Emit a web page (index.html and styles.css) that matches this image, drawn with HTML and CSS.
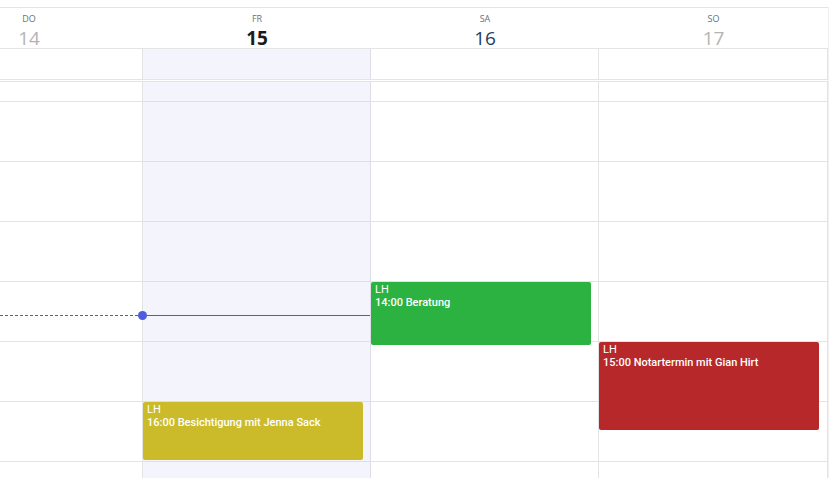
FILE: index.html
```html
<!DOCTYPE html>
<html lang="de">
  <head>
    <meta charset="UTF-8" />
    <meta name="viewport" content="width=device-width, initial-scale=1.0" />
    <title>Kalender Woche</title>
    <link rel="stylesheet" href="styles.css">
  </head>
  <body>
    <div class="calendar">
      <div class="week-head">
        <div class="day-head past">
          <span class="day-name">DO</span>
          <span class="day-num">14</span>
        </div>
        <div class="day-head today">
          <span class="day-name">FR</span>
          <span class="day-num">15</span>
        </div>
        <div class="day-head">
          <span class="day-name">SA</span>
          <span class="day-num">16</span>
        </div>
        <div class="day-head weekend">
          <span class="day-name">SO</span>
          <span class="day-num">17</span>
        </div>
      </div>

      <div class="allday-row">
        <div class="allday-cell"></div>
        <div class="allday-cell today"></div>
        <div class="allday-cell"></div>
        <div class="allday-cell last"></div>
      </div>

      <div class="time-grid">
        <div class="day-col">
          <div class="slot first"></div>
          <div class="slot"></div>
          <div class="slot"></div>
          <div class="slot"></div>
          <div class="slot"></div>
          <div class="slot"></div>
          <div class="slot"></div>
        </div>
        <div class="day-col today">
          <div class="slot first"></div>
          <div class="slot"></div>
          <div class="slot"></div>
          <div class="slot"></div>
          <div class="slot"></div>
          <div class="slot"></div>
          <div class="slot"></div>
          <div class="event yellow" style="top: 320px; height: 58px;">
            <span>LH</span>
            <strong>16:00 Besichtigung mit Jenna Sack</strong>
          </div>
        </div>
        <div class="day-col">
          <div class="slot first"></div>
          <div class="slot"></div>
          <div class="slot"></div>
          <div class="slot"></div>
          <div class="slot"></div>
          <div class="slot"></div>
          <div class="slot"></div>
          <div class="event green" style="top: 200px; height: 63px;">
            <span>LH</span>
            <strong>14:00 Beratung</strong>
          </div>
        </div>
        <div class="day-col last">
          <div class="slot first"></div>
          <div class="slot"></div>
          <div class="slot"></div>
          <div class="slot"></div>
          <div class="slot"></div>
          <div class="slot"></div>
          <div class="slot"></div>
          <div class="event red" style="top: 260px; height: 88px;">
            <span>LH</span>
            <strong>15:00 Notartermin mit Gian Hirt</strong>
          </div>
        </div>

        <div class="now-line">
          <div class="now-past"></div>
          <div class="now-dot"></div>
          <div class="now-today"></div>
        </div>
      </div>
    </div>
  </body>
</html>
```

FILE: styles.css
```css
body {
  margin: 0;
  background: white;
  font-family: "Open Sans", "Noto Sans", Arial, sans-serif;
  color: #333;
}

.calendar {
  width: 829px;
  height: 478px;
  overflow: hidden;
  position: relative;
}

.calendar::after {
  content: "";
  position: absolute;
  top: 7px;
  bottom: 0;
  left: 828px;
  width: 1px;
  background: #efefef;
}

.week-head,
.allday-row,
.time-grid {
  display: grid;
  grid-template-columns: 228px 228px 228px 229px;
  margin-left: -85px;
}

/* header */
.week-head {
  margin-top: 7px;
  border-top: 1px solid #e4e4e4;
  border-bottom: 1px solid #e4e4e4;
}

.day-head {
  height: 40px;
  display: flex;
  flex-direction: column;
  align-items: center;
  padding-top: 5px;
  box-sizing: border-box;
}

.day-name {
  font-size: 9px;
  line-height: 12px;
  color: #6f6f6f;
}

.day-num {
  margin-top: 2px;
  font-size: 19px;
  line-height: 22px;
  color: #24405e;
}

.day-head.today .day-num {
  font-weight: 700;
  color: #1b1b1b;
}

.day-head.past .day-num,
.day-head.weekend .day-num {
  color: #b4b4b4;
}

/* all day row */
.allday-cell {
  height: 30px;
  border-right: 1px solid #e4e4e4;
  border-bottom: 1px solid #e4e4e4;
}

.allday-cell.today {
  background: #f4f4fd;
  border-right-color: #dedee8;
}

.allday-cell.last,
.day-col.last {
  border-right-color: #e4e4e4;
}

/* time grid */
.time-grid {
  border-top: 1px solid #e4e4e4;
  margin-top: 1px;
  height: 396px;
  position: relative;
}

.day-col {
  position: relative;
  border-right: 1px solid #e4e4e4;
  overflow: hidden;
}

.day-col.today {
  background: #f4f4fd;
  border-right-color: #dedee8;
}

.slot {
  height: 59px;
  border-bottom: 1px solid #e4e4e4;
}

.slot.first {
  height: 19px;
}

.day-col.today .slot {
  border-bottom-color: #dedee8;
}

/* events */
.event {
  position: absolute;
  left: 0;
  width: 220px;
  box-sizing: border-box;
  padding: 1px 4px;
  border-radius: 2px;
  color: white;
  font-family: Roboto, "Open Sans", Arial, sans-serif;
  font-size: 11px;
  line-height: 13px;
  display: flex;
  flex-direction: column;
}

.event strong {
  font-weight: 500;
  white-space: nowrap;
}

.event.green {
  background: #2bb240;
}

.event.red {
  background: #b7282a;
}

.event.yellow {
  background: #cbbb2b;
}

/* current time */
.now-line {
  position: absolute;
  top: 233px;
  left: 85px;
  width: 370px;
  height: 1px;
  display: flex;
  align-items: center;
}

.now-past {
  width: 142px;
  height: 1px;
  background: repeating-linear-gradient(to right, #4c58d6 0 3px, transparent 3px 5px);
}

.now-dot {
  position: absolute;
  left: 138px;
  top: -4px;
  width: 9px;
  height: 9px;
  border-radius: 50%;
  background: #4f5be0;
}

.now-today {
  flex: 1;
  height: 1px;
  background: #4c58d6;
}
```
